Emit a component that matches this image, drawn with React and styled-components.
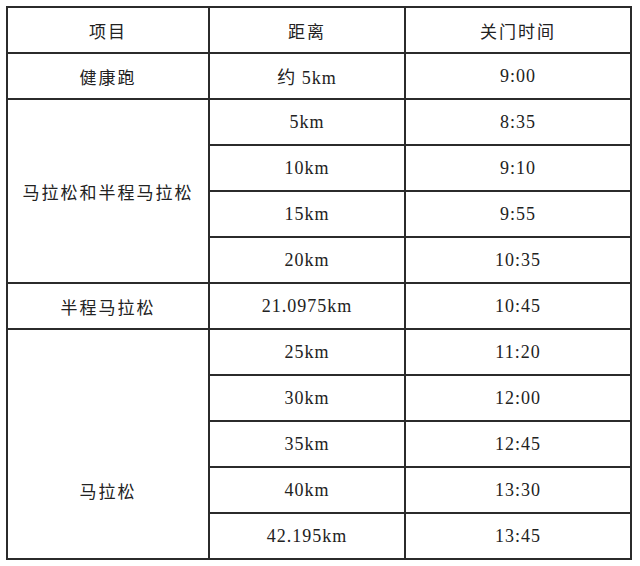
import React from "react";
import styled, { createGlobalStyle } from "styled-components";

const Global = createGlobalStyle`
  html, body { margin: 0; padding: 0; background: #ffffff; }
  body { font-family: "Liberation Serif", "Noto Sans CJK SC", serif; }
`;

const Wrap = styled.div`
  padding: 6px 10px 0 6px;
`;

const Table = styled.table`
  border-collapse: collapse;
  table-layout: fixed;
  width: 624px;
  border: 2px solid #2b2b2b;
  color: #222;
  font-family: "Liberation Serif", "Noto Sans CJK SC", serif;
`;

const Row = styled.tr`
  height: 46px;
`;

const Cell = styled.td`
  border: 2px solid #2b2b2b;
  text-align: center;
  vertical-align: middle;
  padding: ${(p) => (p.$shift ? `${p.$shift}px 0 0 0` : "0")};
  font-size: ${(p) => (p.$cjk ? "17px" : "18px")};
  letter-spacing: ${(p) => (p.$cjk ? "2px" : "1px")};
  font-weight: 400;
  white-space: nowrap;
`;

const rows = [
  { dist: "5km", time: "8:35" },
  { dist: "10km", time: "9:10" },
  { dist: "15km", time: "9:55" },
  { dist: "20km", time: "10:35" },
];

const marathon = [
  { dist: "25km", time: "11:20" },
  { dist: "30km", time: "12:00" },
  { dist: "35km", time: "12:45" },
  { dist: "40km", time: "13:30" },
  { dist: "42.195km", time: "13:45" },
];

export default function App() {
  return (
    <>
      <Global />
      <Wrap>
        <Table>
          <colgroup>
            <col style={{ width: "202px" }} />
            <col style={{ width: "196px" }} />
            <col style={{ width: "226px" }} />
          </colgroup>
          <tbody>
            <Row>
              <Cell $cjk>项目</Cell>
              <Cell $cjk>距离</Cell>
              <Cell $cjk>关门时间</Cell>
            </Row>
            <Row>
              <Cell $cjk>健康跑</Cell>
              <Cell>约 5km</Cell>
              <Cell>9:00</Cell>
            </Row>
            {rows.map((r, i) => (
              <Row key={r.dist}>
                {i === 0 && (
                  <Cell $cjk rowSpan={4}>
                    马拉松和半程马拉松
                  </Cell>
                )}
                <Cell>{r.dist}</Cell>
                <Cell>{r.time}</Cell>
              </Row>
            ))}
            <Row>
              <Cell $cjk>半程马拉松</Cell>
              <Cell>21.0975km</Cell>
              <Cell>10:45</Cell>
            </Row>
            {marathon.map((r, i) => (
              <Row key={r.dist}>
                {i === 0 && (
                  <Cell $cjk rowSpan={5} $shift={92}>
                    马拉松
                  </Cell>
                )}
                <Cell>{r.dist}</Cell>
                <Cell>{r.time}</Cell>
              </Row>
            ))}
          </tbody>
        </Table>
      </Wrap>
    </>
  );
}
